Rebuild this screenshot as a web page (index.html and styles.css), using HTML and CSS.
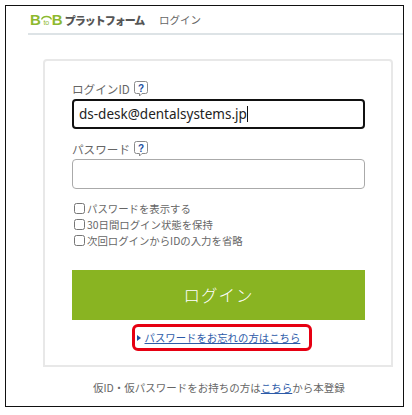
FILE: index.html
```html
<!DOCTYPE html>
<html lang="ja">
<head>
    <meta charset="UTF-8">
    <meta name="viewport" content="width=device-width, initial-scale=1.0">
    <title>ログイン</title>
    <link rel="stylesheet" href="styles.css">
</head>
<body>
    <div class="frame">
        <!-- Header -->
        <header class="header">
            <div class="logo">
                <span class="logo-b">B</span>
                <span class="logo-to">
                    <svg width="11" height="6" viewBox="0 0 11 6"><path d="M.5 5.500C2 1.500 9 1.500 10.500 5.500" fill="none" stroke="#8db92e" stroke-width="1.300"/></svg>
                    <span class="logo-to-text">to</span>
                </span>
                <span class="logo-b">B</span>
                <span class="logo-name">プラットフォーム</span>
            </div>
            <span class="page-name">ログイン</span>
        </header>

        <!-- Login form -->
        <form class="card">
            <label class="label">ログインID
                <svg class="help" width="14" height="16" viewBox="0 0 14 16"><path d="M2.500 .5h9a2 2 0 0 1 2 2v8a2 2 0 0 1-2 2H8L5.500 15v-2.500h-3a2 2 0 0 1-2-2v-8a2 2 0 0 1 2-2z" fill="#fff" stroke="#8a8a8a"/><text x="7" y="10.500" text-anchor="middle" class="help-mark">?</text></svg>
            </label>
            <div class="field-wrap">
                <input class="field field-active" type="text" value="ds-desk@dentalsystems.jp">
                <span class="caret"></span>
            </div>

            <label class="label label-pass">パスワード
                <svg class="help" width="14" height="16" viewBox="0 0 14 16"><path d="M2.500 .5h9a2 2 0 0 1 2 2v8a2 2 0 0 1-2 2H8L5.500 15v-2.500h-3a2 2 0 0 1-2-2v-8a2 2 0 0 1 2-2z" fill="#fff" stroke="#8a8a8a"/><text x="7" y="10.500" text-anchor="middle" class="help-mark">?</text></svg>
            </label>
            <input class="field" type="password">

            <div class="options">
                <label class="option"><input type="checkbox">パスワードを表示する</label>
                <label class="option"><input type="checkbox">30日間ログイン状態を保持</label>
                <label class="option"><input type="checkbox">次回ログインからIDの入力を省略</label>
            </div>

            <button class="submit" type="button">ログイン</button>

            <div class="forgot-row">
                <div class="forgot">
                    <span class="arrow"></span>
                    <a href="#">パスワードをお忘れの方はこちら</a>
                </div>
            </div>
        </form>

        <p class="register">仮ID・仮パスワードをお持ちの方は<a href="#">こちら</a>から本登録</p>
    </div>
</body>
</html>
```

FILE: styles.css
```css
* {
    box-sizing: border-box;
}

body {
    margin: 0;
    background: #fff;
    font-family: "Noto Sans CJK JP", "Liberation Sans", sans-serif;
    color: #666;
}

.frame {
    width: 399px;
    height: 402px;
    margin: 5px 0 0 5px;
    border: 1px solid #111;
    padding: 0 0 0 22px;
    overflow: hidden;
}

.header {
    display: flex;
    align-items: center;
    height: 29px;
    padding: 0 0 0 2px;
    border-bottom: 2px solid #dde3e6;
}

.logo {
    display: flex;
    align-items: center;
    width: 129px;
}

.logo-b {
    font-family: "Liberation Sans", sans-serif;
    font-weight: bold;
    font-size: 15px;
    color: #8db92e;
}

.logo-to {
    display: flex;
    flex-direction: column;
    align-items: center;
    width: 11px;
}

.logo-to svg {
    display: block;
}

.logo-to-text {
    font-family: "Liberation Sans", sans-serif;
    font-size: 7px;
    line-height: 6px;
    color: #8db92e;
}

.logo-name {
    margin-left: 2px;
    font-size: 11px;
    font-weight: 900;
    letter-spacing: -1px;
    color: #555;
    white-space: nowrap;
}

.page-name {
    font-size: 10.500px;
}

.card {
    display: flex;
    flex-direction: column;
    width: 350px;
    height: 308px;
    margin: 24px 0 0 15px;
    padding: 18px 27px 0;
    border: 2px solid #e8e8e8;
    border-radius: 4px 4px 0 0;
}

.label {
    display: flex;
    align-items: center;
    gap: 4px;
    height: 20px;
    font-size: 11.600px;
}

.help-mark {
    font-family: "Liberation Sans", sans-serif;
    font-size: 10px;
    font-weight: bold;
    fill: #1d4fa0;
}

.field-wrap {
    position: relative;
}

.caret {
    position: absolute;
    left: 175px;
    top: 7px;
    width: 1px;
    height: 16px;
    background: #111;
}

.field {
    display: block;
    width: 293px;
    height: 30px;
    padding: 0 5px;
    margin: 0;
    border: 1px solid #aaa;
    border-radius: 4px;
    outline: none;
    font-family: "Noto Sans", "Liberation Sans", sans-serif;
    font-size: 13.500px;
    color: #222;
    background: #fff;
}

.field-active {
    border: 2px solid #111;
}

.label-pass {
    margin-top: 10px;
}

.options {
    display: flex;
    flex-direction: column;
    margin-top: 11px;
}

.option {
    display: flex;
    align-items: center;
    height: 16px;
    font-size: 10.400px;
    white-space: nowrap;
}

.option input {
    width: 11px;
    height: 11px;
    margin: 0 2px;
}

.submit {
    width: 293px;
    height: 50px;
    margin-top: 22px;
    border: none;
    background: #89b422;
    color: #fff;
    font-family: inherit;
    font-size: 16.500px;
    font-weight: 300;
    letter-spacing: 1px;
}

.forgot-row {
    display: flex;
    justify-content: center;
    margin-top: 4px;
    padding-left: 7px;
}

.forgot {
    display: flex;
    align-items: center;
    gap: 4px;
    width: 180px;
    height: 27px;
    padding-left: 2px;
    border: 3px solid #e60012;
    border-radius: 6px;
    font-size: 10.400px;
    white-space: nowrap;
}

.arrow {
    width: 0;
    height: 0;
    border-left: 4px solid #1d4fa0;
    border-top: 3px solid transparent;
    border-bottom: 3px solid transparent;
}

a {
    color: #2c5aa8;
}

.register {
    margin: 13px 0 0 65px;
    font-size: 10.500px;
    line-height: 16px;
    white-space: nowrap;
}
```
